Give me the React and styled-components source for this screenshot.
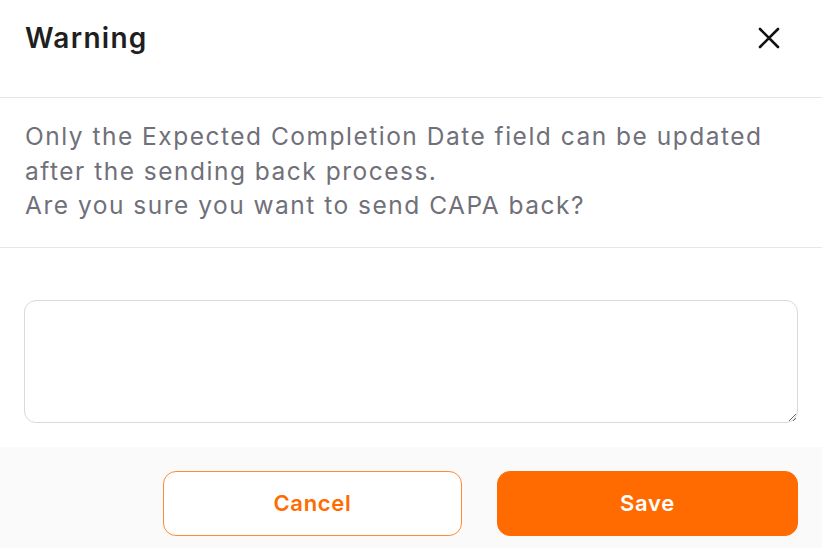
import React from "react";
import styled, { createGlobalStyle } from "styled-components";

const Global = createGlobalStyle`
  html, body { margin: 0; padding: 0; background: #ffffff; }
  body { font-family: Inter, "Noto Sans", sans-serif; }
  * { box-sizing: border-box; }
`;

const Dialog = styled.div`
  width: 822px;
  height: 548px;
  background: #ffffff;
  display: flex;
  flex-direction: column;
  overflow: hidden;
`;

const Header = styled.div`
  height: 98px;
  flex: none;
  display: flex;
  align-items: center;
  justify-content: space-between;
  padding: 0 40px 22px 25px;
  border-bottom: 1.5px solid #e6e6e6;
`;

const Title = styled.h2`
  margin: 0;
  font-size: 28px;
  font-weight: 600;
  color: #1f1f1f;
  letter-spacing: 1.3px;
`;

const CloseButton = styled.button`
  border: none;
  background: none;
  padding: 0;
  width: 26px;
  height: 26px;
  display: flex;
  align-items: center;
  justify-content: center;
  cursor: pointer;
`;

const Message = styled.div`
  padding: 21px 25px 24px;
  border-bottom: 1.5px solid #e6e6e6;
  font-size: 24.5px;
  line-height: 34.5px;
  letter-spacing: 1.5px;
  color: #70707a;
`;

const Line = styled.div`
  white-space: nowrap;
`;

const FieldArea = styled.div`
  padding: 52px 24px 24px;
`;

const TextArea = styled.textarea`
  display: block;
  width: 100%;
  height: 123px;
  border: 1.5px solid #d9d9d9;
  border-radius: 12px;
  resize: vertical;
  font-family: inherit;
  font-size: 22px;
  padding: 12px;
  outline: none;
`;

const Footer = styled.div`
  flex: 1;
  background: #fafafa;
  display: flex;
  justify-content: flex-end;
  align-items: flex-start;
  gap: 35px;
  padding: 24px 24px 0;
`;

const Button = styled.button`
  width: ${(p) => p.$w}px;
  height: 65px;
  border-radius: 13px;
  font-family: Inter, "Noto Sans", sans-serif;
  font-size: 22px;
  font-weight: 600;
  letter-spacing: 0.7px;
  cursor: pointer;
  border: 1.5px solid #ff8a33;
  background: ${(p) => (p.$primary ? "#ff6b00" : "#ffffff")};
  color: ${(p) => (p.$primary ? "#ffffff" : "#ff6b00")};
  ${(p) => p.$primary && "border-color: #ff6b00;"}
`;

export default function App() {
  return (
    <>
      <Global />
      <Dialog>
        <Header>
          <Title>Warning</Title>
          <CloseButton aria-label="Close">
            <svg width="22" height="22" viewBox="0 0 22 22">
              <path d="M2 2 L20 20 M20 2 L2 20" stroke="#111" strokeWidth="2.6" strokeLinecap="round" />
            </svg>
          </CloseButton>
        </Header>
        <Message>
          <Line>Only the Expected Completion Date field can be updated</Line>
          <Line>after the sending back process.</Line>
          <Line>Are you sure you want to send CAPA back?</Line>
        </Message>
        <FieldArea>
          <TextArea />
        </FieldArea>
        <Footer>
          <Button $w={299}>Cancel</Button>
          <Button $w={301} $primary>Save</Button>
        </Footer>
      </Dialog>
    </>
  );
}
